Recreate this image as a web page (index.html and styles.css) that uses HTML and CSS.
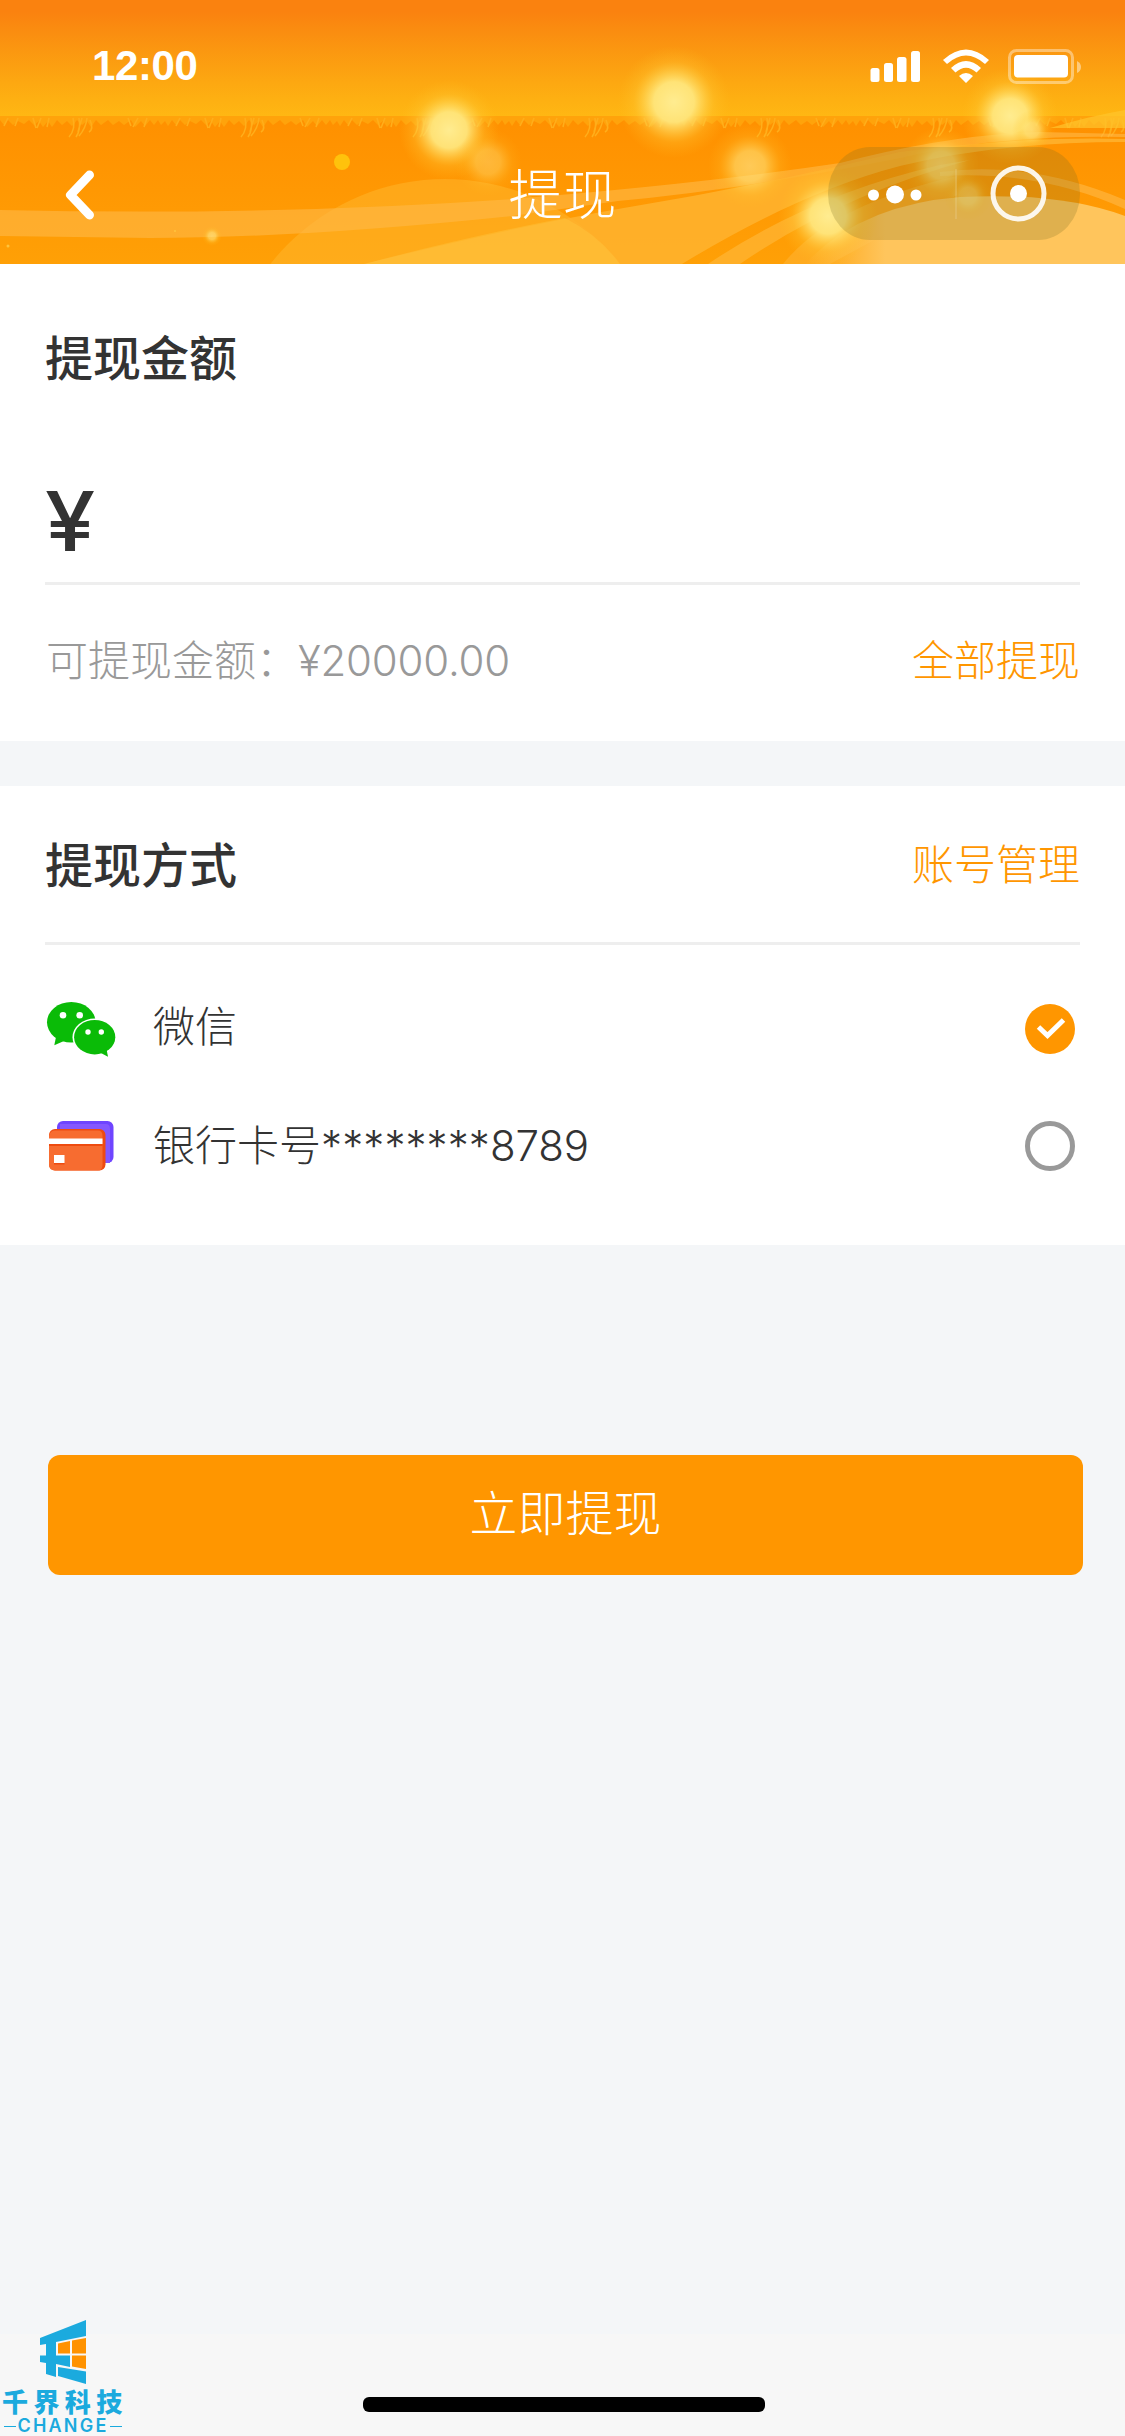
FILE: index.html
```html
<!DOCTYPE html>
<html lang="zh-CN">
<head>
<meta charset="utf-8">
<title>提现</title>
<link rel="stylesheet" href="styles.css">
</head>
<body>
<div class="screen">
  <header class="header">
    <svg class="header-art" viewBox="0 0 1125 264" aria-hidden="true">
      <defs>
        <linearGradient id="sky" x1="0" y1="0" x2="0" y2="1">
          <stop offset="0.1" stop-color="#fa820f"/><stop offset="0.28" stop-color="#fa8e10"/>
          <stop offset="0.7" stop-color="#fda811"/><stop offset="1" stop-color="#ffb813"/>
        </linearGradient>
        <linearGradient id="ground" x1="0" y1="0" x2="0" y2="1">
          <stop offset="0" stop-color="#ff9000"/><stop offset="1" stop-color="#ffa006"/>
        </linearGradient>
        <radialGradient id="glow">
          <stop offset="0" stop-color="#ffec90"/><stop offset=".36" stop-color="#ffe67c" stop-opacity=".95"/>
          <stop offset=".52" stop-color="#ffdc60" stop-opacity=".65"/><stop offset=".72" stop-color="#ffcc38" stop-opacity=".28"/>
          <stop offset="1" stop-color="#ffc020" stop-opacity="0"/>
        </radialGradient>
        <linearGradient id="haze" x1="0" y1="0" x2="1" y2="0">
          <stop offset="0" stop-color="#ffc55c" stop-opacity="0"/><stop offset=".25" stop-color="#ffc55c"/>
        </linearGradient>
        <pattern id="grass" y="116" width="172" height="24" patternUnits="userSpaceOnUse">
          <path d="M0 0H172V4L168 10 165 5 161 9 158 4 154 9 150 4 145 10 141 5 135 11 131 4 124 9 119 5 113 9 108 4 101 9 96 4 91 11 87 5 82 9 77 4 72 10 67 5 62 9 57 4 52 11 48 5 43 11 39 5 34 9 29 4 24 8 18 5 13 9 8 4 4 9 0 4Z" fill="#ffa30b"/>
          <path d="M73 2q3 11-4 19M79 2q2 12-3 19M87 2q-1 10-8 18M82 2q-3 10-4 14M90 4q4 9-1 12M33 2l3 10M41 2l-4 10M49 2l-2 9M128 2l3 8M138 2l-5 9M147 2l-3 9M8 2l-4 8M18 2l-3 8" fill="none" stroke="#ffae1a" stroke-width="1.5"/>
        </pattern>
      </defs>
      <path fill="url(#sky)" d="M0 0H1125V118H0z"/>
      <path fill="url(#ground)" d="M0 117H1125V264H0z"/>
      <path fill="url(#grass)" d="M0 116H1125V140H0z"/>
      <circle cx="445" cy="401" r="222" fill="#ffb72e" fill-opacity=".5"/>
      <path fill="#ffb947" fill-opacity=".6" d="M0 210Q270 216 512 199Q700 184 840 163Q950 134 1040 132L1125 134V137Q1000 134 900 158Q740 190 618 201L512 216Q300 238 150 238L0 236z"/>
      <path fill="#ffb32f" fill-opacity=".85" d="M364 264Q500 230 618 209Q760 186 900 152Q1020 136 1125 139V142Q1000 142 900 166Q800 192 682 264z"/>
      <path fill="#ffc840" fill-opacity=".4" d="M364 264Q470 236 565 218Q600 236 620 264z"/>
      <path fill="#ffb32f" fill-opacity=".8" d="M708 264Q810 195 940 165L970 160Q840 195 740 264z"/>
      <path fill="#ffb638" fill-opacity=".5" d="M783 264Q830 205 957 176V195L830 264z"/>
      <path fill="#ffb947" fill-opacity=".6" d="M940 172Q1030 160 1125 200V209Q1040 170 940 176z"/>
      <path fill="url(#haze)" d="M805 264Q860 205 960 197Q1060 192 1125 216V264z"/>
      <path fill="#ffc52c" fill-opacity=".7" d="M1050 128Q1090 116 1125 110V128z"/>
      <g fill="url(#glow)">
        <circle cx="449" cy="130" r="50"/><circle cx="674" cy="102" r="56"/>
        <circle cx="1010" cy="116" r="48"/><circle cx="828" cy="216" r="50"/>
        <circle cx="488" cy="162" r="34" opacity=".4"/><circle cx="750" cy="166" r="42" opacity=".6"/>
        <circle cx="941" cy="165" r="38" opacity=".7"/><circle cx="968" cy="196" r="24" opacity=".5"/>
        <circle cx="1032" cy="130" r="20" opacity=".6"/><circle cx="212" cy="236" r="10" opacity=".6"/>
      </g>
      <circle cx="342" cy="162" r="8" fill="#ffc20c"/>
      <circle cx="8" cy="246" r="1.500" fill="#ffc43c"/><circle cx="175" cy="231" r="1" fill="#ffc43c"/>
    </svg>
    <div class="status-bar">
      <span class="time">12:00</span>
      <svg class="status-icons" viewBox="0 0 212 36" fill="#fff" aria-hidden="true">
        <rect x="0.500" y="20" width="9" height="14" rx="2.500"/><rect x="14" y="15" width="9" height="19" rx="2.500"/>
        <rect x="27" y="9" width="9.500" height="25" rx="2.500"/><rect x="41" y="3" width="9" height="31" rx="2.500"/>
        <path d="M73 12Q96-9 119 12L115 16Q96-1 77 16zM81 20Q96 6 111 20L106.500 24.500Q96 15 85.500 24.500zM89 28Q96 22 103 28L96 35z"/>
        <rect x="139.500" y="2.500" width="63" height="32" rx="7" fill="none" stroke="#fff" stroke-opacity=".4" stroke-width="3"/>
        <rect x="144" y="7" width="54" height="22.500" rx="4"/><path d="M207 13Q211 15 211 19T207 25z" opacity=".45"/>
      </svg>
    </div>
    <div class="nav">
      <svg class="back" viewBox="0 0 30 50" aria-label="返回"><path d="M24.500 5 5.500 25 24.500 45" fill="none" stroke="#fff" stroke-width="9" stroke-linecap="round" stroke-linejoin="round"/></svg>
      <h1 class="title">提现</h1>
      <svg class="capsule" viewBox="0 0 252 93" aria-hidden="true">
        <rect width="252" height="93" rx="42" ry="46" fill="#7a6b22" fill-opacity=".24"/>
        <g fill="#fff"><circle cx="45.500" cy="48" r="5.500"/><circle cx="67" cy="47.500" r="9"/><circle cx="88" cy="48" r="5.500"/><circle cx="190.500" cy="46.500" r="8.500"/></g>
        <circle cx="190.500" cy="46.500" r="25.500" fill="none" stroke="#fff" stroke-opacity=".9" stroke-width="5"/>
        <path d="M128 22V72" stroke="#fff" stroke-opacity=".12" stroke-width="2"/>
      </svg>
    </div>
  </header>

  <section class="card amount">
    <h2 class="heading">提现金额</h2>
    <div class="amount-input"><span class="currency">¥</span></div>
    <div class="available">
      <p class="balance">可提现金额：<span class="number">¥20000.00</span></p>
      <a class="link">全部提现</a>
    </div>
  </section>

  <section class="card methods">
    <div class="methods-head">
      <h2 class="heading">提现方式</h2>
      <a class="link">账号管理</a>
    </div>
    <div class="method method-wechat">
      <svg class="method-icon" viewBox="0 0 70 58" aria-hidden="true">
        <g fill="#0abb07"><ellipse cx="25.300" cy="22.300" rx="24.300" ry="20.300"/><path d="M10 37 8.300 45.300 18 41z"/></g>
        <ellipse cx="48.700" cy="37.200" rx="22.200" ry="18.700" fill="#fff"/>
        <g fill="#0abb07"><ellipse cx="48.700" cy="37.200" rx="20.600" ry="17.200"/><path d="M60.500 49 62 56.700 54 52.500z"/></g>
        <g fill="#fff"><circle cx="17" cy="15.200" r="3.300"/><circle cx="33.700" cy="15.200" r="3.300"/><circle cx="42" cy="32" r="2.700"/><circle cx="55.300" cy="32" r="2.700"/></g>
      </svg>
      <span class="method-name">微信</span>
      <svg class="radio" viewBox="0 0 50 50" aria-label="已选择"><circle cx="25" cy="25" r="25" fill="#ff9600"/><path d="M13.500 23 22.500 31.500 38.500 16" fill="none" stroke="#fff" stroke-width="5"/></svg>
    </div>
    <div class="method">
      <svg class="method-icon" viewBox="0 0 70 58" aria-hidden="true">
        <rect x="11" y="4" width="56.500" height="42" rx="6" fill="#6f45ff"/><path d="M14 7H60Q64 7 64 12V46H14z" fill="#8458ff"/>
        <rect x="3" y="12" width="56.500" height="41.500" rx="6" fill="#ee4b10"/><path d="M3 19Q4 13.500 9 13.500H52Q56.500 13.500 56.500 19V48Q56.500 53.500 52 53.500H9Q3 53.500 3 47z" fill="#f76c30"/>
        <path fill="#fff" d="M3 21.500H56.500V27H3zM8 38H18.500V46H8z"/><path fill="#ee4b10" d="M3 27H56.500V29H3zM8 46H18.500V47.500H8z"/>
      </svg>
      <span class="method-name">银行卡号<span class="stars">********</span><span class="number">8789</span></span>
      <svg class="radio" viewBox="0 0 50 50" aria-label="未选择"><circle cx="25" cy="25" r="22.500" fill="none" stroke="#999" stroke-width="5"/></svg>
    </div>
  </section>

  <button class="submit" type="button">立即提现</button>

  <footer class="footer">
    <div class="brand">
      <svg class="brand-mark" viewBox="0 0 46 64" aria-hidden="true">
        <path fill="#1baade" d="M0 18 46 0V16L16 22V35.500H30V47L16 44V57L6 54V43L0 42V35.500H6V24L0 25zM18 47 46 51.500V64L18 56z"/>
        <path fill="#ff9200" d="M18 23.500 30 21V33.500H18zM32 20.500 46 18V33.500H32zM32 35.500H46V49L32 46.500z"/>
      </svg>
      <span class="brand-name">千界科技</span>
      <span class="brand-latin">CHANGE</span>
    </div>
    <div class="home-indicator"></div>
  </footer>
</div>
</body>
</html>
```
FILE: styles.css
```css
* { box-sizing: border-box; }
body, h1, h2, p { margin: 0; }
body {
  background: #f4f6f8;
  color: #333;
  font-family: "Noto Sans CJK SC", sans-serif;
  font-size: 42px;
  font-weight: 300;
}
svg { display: block; }
.screen {
  width: 1125px;
  height: 2436px;
  display: flex;
  flex-direction: column;
  overflow: hidden;
}
.header { position: relative; height: 264px; color: #fff; }
.header-art { position: absolute; inset: 0; width: 1125px; height: 264px; }
.status-bar {
  position: relative;
  display: flex;
  justify-content: space-between;
  height: 147px;
  padding: 48px 43px 0 92px;
}
.time { font: bold 42px/36px "Liberation Sans", sans-serif; letter-spacing: -.4px; }
.status-icons { width: 212px; height: 36px; }
.nav {
  position: relative;
  display: grid;
  grid-template-columns: 252px 1fr 252px;
  align-items: center;
  height: 93px;
  padding: 0 45px;
}
.back { width: 30px; height: 50px; margin: 2px 0 0 20px; }
.title { padding-bottom: 4px; font-size: 54px; line-height: 80px; font-weight: 300; text-align: center; }
.capsule { width: 252px; height: 93px; }
.card { background: #fff; padding: 0 45px; }
.heading { font-size: 48px; line-height: 72px; font-weight: 500; }
.amount { height: 477px; padding-top: 55px; }
.amount-input {
  height: 194px;
  padding-top: 71px;
  border-bottom: 3px solid #eee;
  font: 500 82px/120px Inter, sans-serif;
}
.currency { display: inline-block; transform: scaleX(1.1); transform-origin: left; }
.available {
  display: flex;
  justify-content: space-between;
  padding: 41px 0 0 1px;
  line-height: 63px;
}
.balance { color: #999; }
.number { font-family: Inter, sans-serif; letter-spacing: -.2px; }
.link { color: #ff9600; }
.methods { height: 459px; margin-top: 45px; }
.methods-head {
  display: flex;
  justify-content: space-between;
  align-items: center;
  height: 159px;
  padding-bottom: 5px;
  border-bottom: 3px solid #eee;
}
.method {
  display: grid;
  grid-template-columns: 108px 1fr 50px;
  grid-template-rows: 50px;
  align-items: center;
  height: 50px;
  margin-top: 59px;
  padding-right: 5px;
}
.method + .method { margin-top: 67px; }
.method-icon { width: 70px; height: 58px; margin-left: 1px; }
.method-name { padding-bottom: 4px; line-height: 46px; }
.method-wechat .method-name { padding-bottom: 10px; line-height: 40px; }
.stars { font-family: Inter, sans-serif; letter-spacing: .1px; }
.radio { width: 50px; height: 50px; }
.submit {
  width: 1035px;
  height: 120px;
  margin: 210px 0 0 48px;
  padding: 0 0 10px;
  border: 0;
  border-radius: 12px;
  background: #ff9600;
  color: #fff;
  font: 300 48px/72px "Noto Sans CJK SC", sans-serif;
}
.footer {
  position: relative;
  display: flex;
  justify-content: center;
  height: 102px;
  margin-top: auto;
  padding-top: 63px;
  background: #f7f7f7;
}
.home-indicator { width: 402px; height: 15px; margin-left: 3px; border-radius: 6px; background: #000; }
.brand {
  position: absolute;
  left: 2px;
  bottom: 0;
  width: 122px;
  height: 116px;
  color: #1baade;
}
.brand-mark { width: 46px; height: 64px; margin-left: 38px; }
.brand-name { display: block; margin-top: 2px; font-size: 26px; line-height: 30px; font-weight: 900; letter-spacing: 5.4px; white-space: nowrap; }
.brand-latin {
  display: flex;
  align-items: center;
  gap: 1px;
  margin: 2px 2px 0 2px;
  font: 600 18px/16px Inter, sans-serif;
  letter-spacing: 2.2px;
}
.brand-latin::before, .brand-latin::after { content: ""; flex: 1; height: 1px; background: currentColor; }
```
